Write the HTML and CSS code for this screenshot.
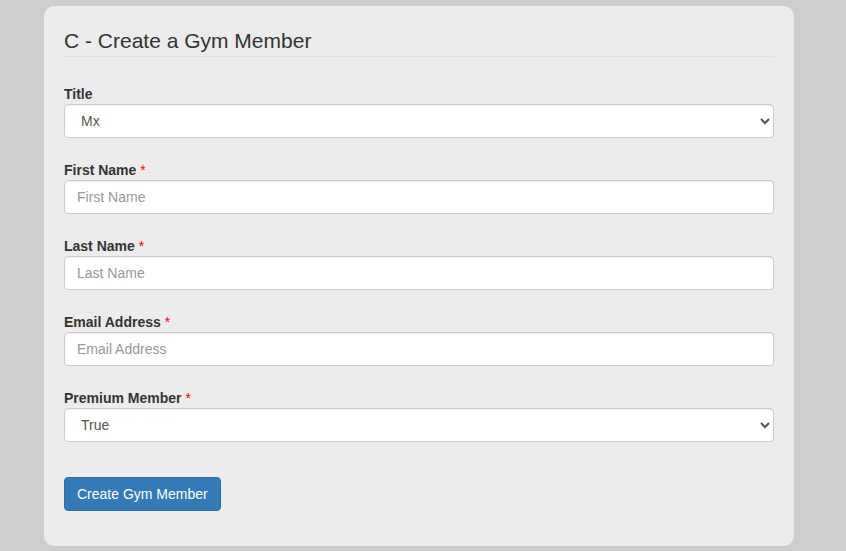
FILE: index.html
```html
<!DOCTYPE html>
<html>
<head>
<meta charset="utf-8">
<title>Create a Gym Member</title>
<link rel="stylesheet" href="styles.css">
</head>
<body>
<div class="card">
  <h3 class="card-title">C - Create a Gym Member</h3>
  <form class="form">
    <div class="form-group">
      <label class="label" for="title">Title</label>
      <select class="control" id="title">
        <option>Mx</option>
        <option>Mr</option>
        <option>Mrs</option>
        <option>Ms</option>
      </select>
    </div>
    <div class="form-group">
      <label class="label" for="first">First Name <span class="req">*</span></label>
      <input class="control" id="first" type="text" placeholder="First Name">
    </div>
    <div class="form-group">
      <label class="label" for="last">Last Name <span class="req">*</span></label>
      <input class="control" id="last" type="text" placeholder="Last Name">
    </div>
    <div class="form-group">
      <label class="label" for="email">Email Address <span class="req">*</span></label>
      <input class="control" id="email" type="email" placeholder="Email Address">
    </div>
    <div class="form-group">
      <label class="label" for="premium">Premium Member <span class="req">*</span></label>
      <select class="control" id="premium">
        <option>True</option>
        <option>False</option>
      </select>
    </div>
    <button class="btn" type="button">Create Gym Member</button>
  </form>
</div>
</body>
</html>
```
FILE: styles.css
```css
html, body {
  margin: 0;
  padding: 0;
}
body {
  background: #cecece;
  font-family: "Liberation Sans", Arial, Helvetica, sans-serif;
  font-size: 14px;
  line-height: 20px;
  color: #333;
  padding-top: 6px;
  height: 551px;
  box-sizing: border-box;
}
.card {
  width: 750px;
  margin-left: 44px;
  box-sizing: border-box;
  background: #ececec;
  border-radius: 10px;
  padding: 24px 20px 35px 20px;
}
.card-title {
  margin: 0;
  font-size: 21px;
  font-weight: normal;
  line-height: 22px;
  color: #333;
  padding-bottom: 4px;
  border-bottom: 1px solid #e0e0e0;
}
.form {
  margin-top: 27px;
  display: flex;
  flex-direction: column;
}
.form-group {
  display: flex;
  flex-direction: column;
  margin-bottom: 22px;
}
.label {
  font-weight: bold;
  line-height: 20px;
  color: #333;
}
.req {
  color: #f00;
  font-weight: normal;
}
.control {
  height: 34px;
  box-sizing: border-box;
  width: 100%;
  padding: 6px 12px;
  font-family: "Liberation Sans", Arial, Helvetica, sans-serif;
  font-size: 14px;
  color: #555;
  background: #fff;
  border: 1px solid #ccc;
  border-radius: 4px;
  box-shadow: inset 0 1px 1px rgba(0,0,0,0.075);
  margin: 0;
}
select.control {
  padding: 6px 8px 6px 12px;
}
.control::placeholder {
  color: #999;
}
.btn {
  align-self: flex-start;
  margin-top: 13px;
  height: 34px;
  padding: 6px 12px;
  font-family: "Liberation Sans", Arial, Helvetica, sans-serif;
  font-size: 14px;
  line-height: 20px;
  color: #fff;
  background: #337ab7;
  border: 1px solid #2e6da4;
  border-radius: 4px;
}
```
